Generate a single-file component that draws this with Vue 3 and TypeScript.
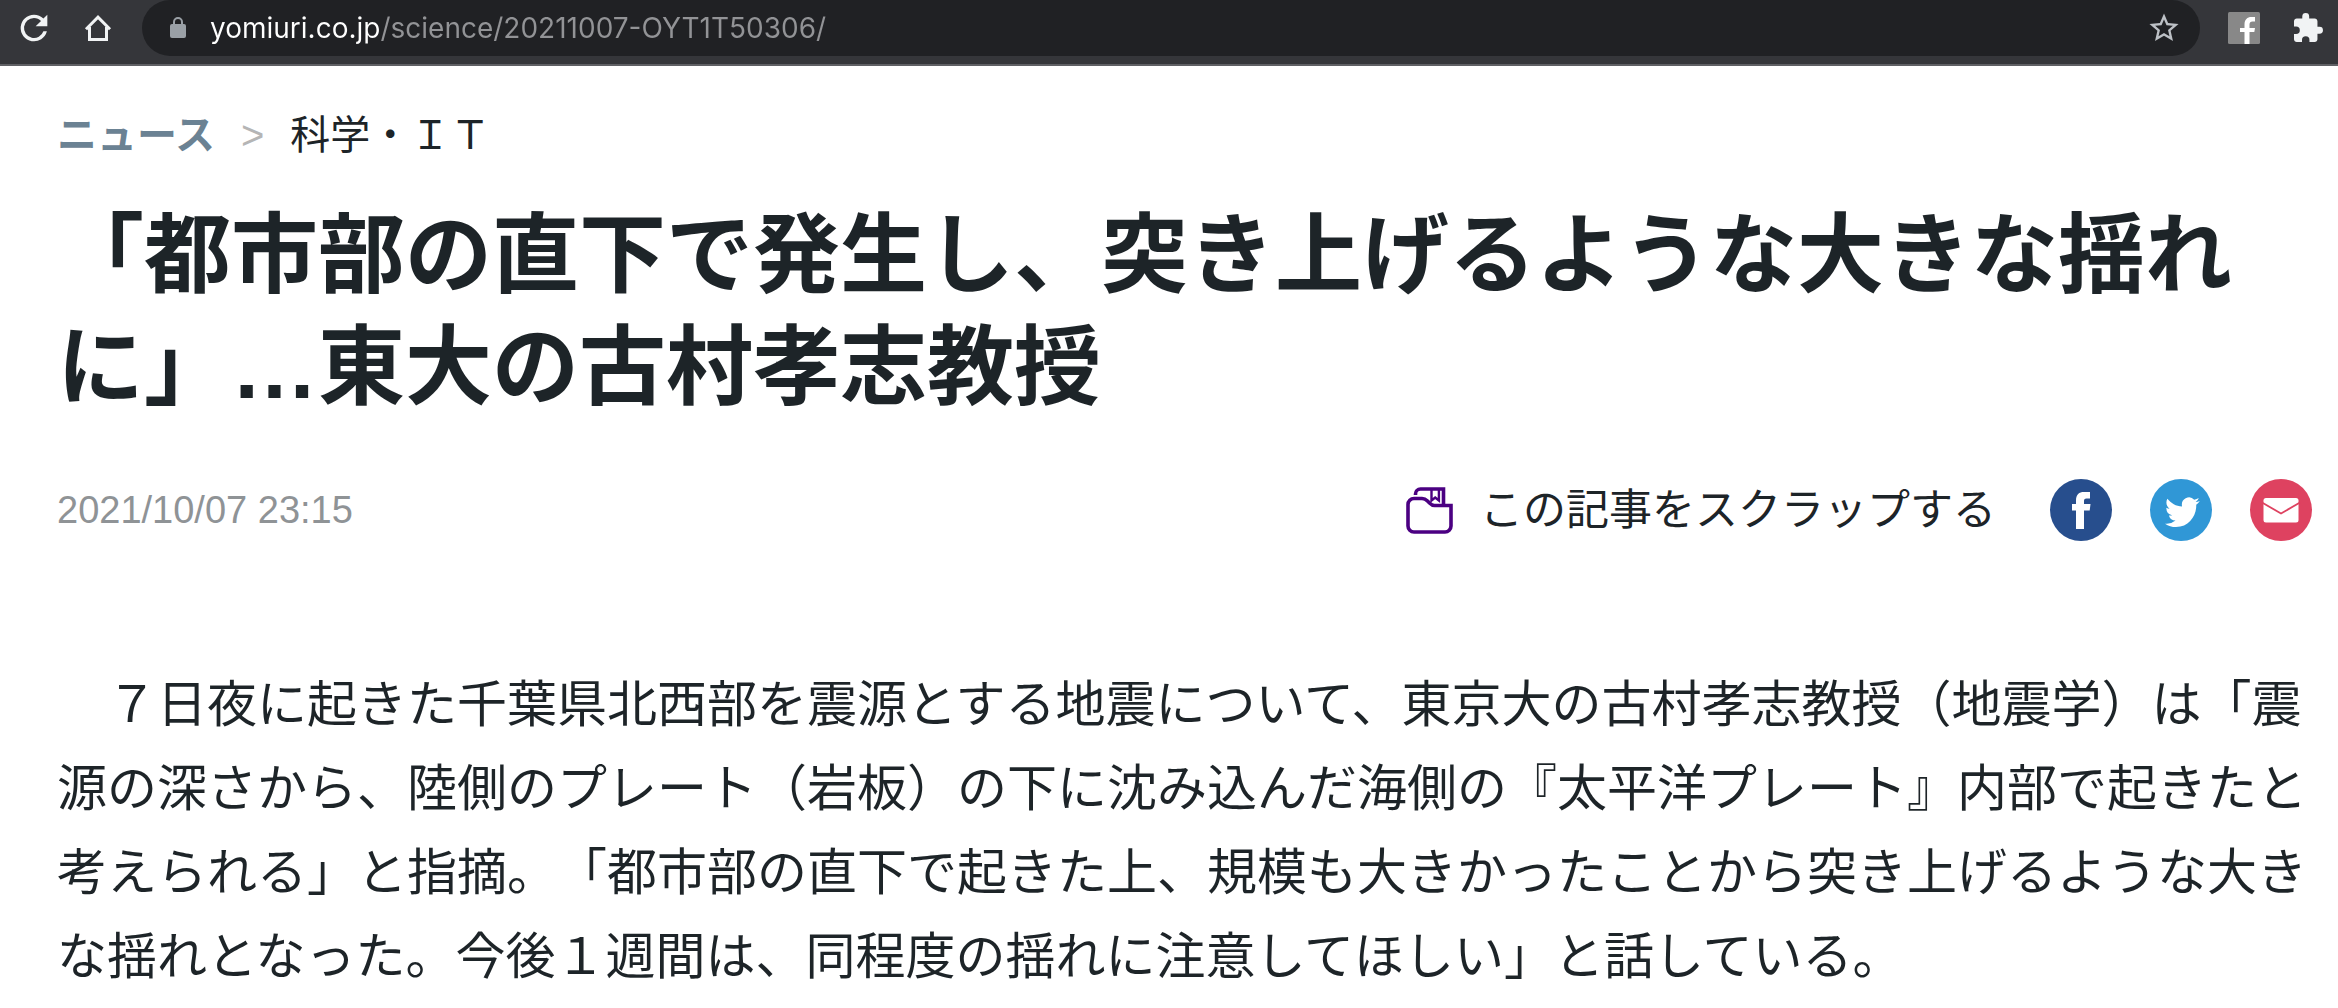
<script setup lang="ts">
import { ref } from 'vue'

const address = ref('yomiuri.co.jp/science/20211007-OYT1T50306/')
</script>

<template>
  <div class="window">
    <header class="toolbar">
      <button class="tool" type="button" aria-label="再読み込み">
        <svg viewBox="2.4 2.4 19.2 19.2">
          <path
            fill="#f1f3f4"
            d="M17.65 6.35A7.96 7.96 0 0 0 12 4a8 8 0 1 0 7.73 10h-2.08A6 6 0 1 1 12 6c1.66 0 3.14.69 4.22 1.78L13 11h7V4z"
          />
        </svg>
      </button>
      <button class="tool" type="button" aria-label="ホーム">
        <svg viewBox="0 0 32 32" fill="none" stroke="#f1f3f4" stroke-width="3">
          <path d="M7.5 15v12.5h17V15" />
          <path d="M4 17.200L16 5.200l12 12" />
        </svg>
      </button>
      <form class="omnibox" @submit.prevent>
        <svg class="lock" viewBox="0 0 16 22">
          <path d="M4 8V5a4 4 0 0 1 8 0v3" fill="none" stroke="#9aa0a6" stroke-width="2" />
          <rect y="7" width="16" height="14" rx="2" fill="#9aa0a6" />
        </svg>
        <input v-model="address" class="url" type="text" aria-label="アドレス" spellcheck="false" />
        <button class="tool" type="button" aria-label="ブックマーク">
          <svg viewBox="1 1 22 22">
            <path
              fill="#bdc1c6"
              d="M22 9.240l-7.190-.620L12 2 9.190 8.630 2 9.240l5.460 4.730L5.820 21 12 17.270 18.180 21l-1.630-7.030zM12 15.400l-3.760 2.270 1-4.280-3.320-2.880 4.380-.380L12 6.100l1.710 4.040 4.380.380-3.320 2.880 1 4.280z"
            />
          </svg>
        </button>
      </form>
      <button class="tool" type="button" aria-label="Facebook 拡張機能">
        <svg viewBox="0 0 32 32">
          <rect width="32" height="32" rx="1.500" fill="#888" />
          <path
            fill="#fff"
            d="M16.500 32V20H12v-4h4.500v-3.500c0-5 2.800-7.500 7-7.500H27v4.500h-2.500c-2 0-3 1-3 3V16H27l-.700 4h-4.800v12z"
          />
        </svg>
      </button>
      <button class="tool" type="button" aria-label="拡張機能">
        <svg viewBox="0.550 0.280 23.200 23.200">
          <path
            fill="#f1f3f4"
            d="M20.500 11H19V7c0-1.100-.9-2-2-2h-4V3.500a2.500 2.500 0 0 0-5 0V5H4c-1.100 0-2 .9-2 2v3.800h1.500a2.700 2.700 0 0 1 0 5.400H2V20c0 1.100.9 2 2 2h3.800v-1.500a2.700 2.700 0 0 1 5.400 0V22H17c1.100 0 2-.9 2-2v-4h1.500a2.500 2.500 0 0 0 0-5z"
          />
        </svg>
      </button>
    </header>

    <main class="article">
      <nav class="crumbs" aria-label="パンくずリスト">
        <a class="crumb-link" href="#news">ニュース</a>
        <span class="crumb-sep">&gt;</span>
        <span>科学・ＩＴ</span>
      </nav>

      <h1 class="title">「都市部の直下で発生し、突き上げるような大きな揺れに」…東大の古村孝志教授</h1>

      <div class="meta">
        <time datetime="2021-10-07T23:15">2021/10/07 23:15</time>
        <button class="scrap" type="button">
          <svg viewBox="0 0 48 48" fill="none" stroke="#4b0082" stroke-width="3.600">
            <path
              d="M2 18.500a6 6 0 0 1 6-6h8c3 0 4 1 5.500 2.500l2 2c1.500 1.500 2.500 2.500 5 2.500H45V40a6 6 0 0 1-6 6H8a6 6 0 0 1-6-6z"
            />
            <path d="M9.500 9V8a5 5 0 0 1 5-5h23v16" />
            <path d="M25.500 3v11.500l3.700-3 3.700 3V3" stroke-width="2.400" />
          </svg>
          この記事をスクラップする
        </button>
        <div class="share">
          <a href="#facebook" aria-label="Facebook">
            <svg viewBox="0 0 62 62">
              <circle cx="31" cy="31" r="31" fill="#274e8d" />
              <path
                fill="#fff"
                d="M26 50V31.500h-4V25h4v-3.500c0-6 3-8.500 8-8.500h6v6.500h-3.500c-2 0-2.500 1-2.500 2.500v3h6.500l-.8 6.500H34V50z"
              />
            </svg>
          </a>
          <a href="#twitter" aria-label="Twitter">
            <svg viewBox="0 0 62 62">
              <circle cx="31" cy="31" r="31" fill="#3097d6" />
              <path
                fill="#fff"
                transform="translate(15 15) scale(1.450 1.520)"
                d="M23.950 4.570a10 10 0 0 1-2.820.770 4.960 4.960 0 0 0 2.160-2.720c-.950.550-2 .950-3.130 1.180a4.920 4.920 0 0 0-8.380 4.480C7.690 8.090 4.070 6.130 1.640 3.160a4.820 4.820 0 0 0-.670 2.470c0 1.710.870 3.210 2.190 4.100a4.900 4.900 0 0 1-2.230-.620v.060a4.920 4.920 0 0 0 3.950 4.830 5 5 0 0 1-2.210.080 4.940 4.940 0 0 0 4.600 3.420A9.870 9.870 0 0 1 0 19.540a13.990 13.990 0 0 0 7.550 2.210c9.050 0 14-7.500 14-13.980 0-.210 0-.420-.020-.630a9.940 9.940 0 0 0 2.460-2.550z"
              />
            </svg>
          </a>
          <a href="#mail" aria-label="メール">
            <svg viewBox="0 0 62 62">
              <circle cx="31" cy="31" r="31" fill="#de4260" />
              <rect x="13.500" y="19" width="35" height="24.500" rx="2.500" fill="#fff" />
              <path d="M12 23.500l19 11 19-11" fill="none" stroke="#de4260" stroke-width="1.800" />
            </svg>
          </a>
        </div>
      </div>

      <p class="body">
        　７日夜に起きた千葉県北西部を震源とする地震について、東京大の古村孝志教授（地震学）は「震源の深さから、陸側のプレート（岩板）の下に沈み込んだ海側の『太平洋プレート』内部で起きたと考えられる」と指摘。「都市部の直下で起きた上、規模も大きかったことから突き上げるような大きな揺れとなった。今後１週間は、同程度の揺れに注意してほしい」と話している。
      </p>
    </main>
  </div>
</template>

<style>
body {
  margin: 0;
  background: #fff;
}
</style>

<style scoped>
.window {
  color: #1d2428;
  font-family: "Liberation Sans", "Noto Sans CJK JP", sans-serif;
  text-spacing-trim: space-all;
}

button {
  padding: 0;
  border: 0;
  background: none;
  color: inherit;
  font: inherit;
  cursor: pointer;
}

svg {
  display: block;
}

.toolbar {
  display: flex;
  align-items: center;
  gap: 32px;
  padding: 0 14px 8px 18px;
  border-bottom: 2px solid #5f6064;
  background: #35363a;
}

.tool,
.tool svg {
  flex: none;
  width: 32px;
  height: 32px;
}

.omnibox {
  display: flex;
  flex: 1;
  align-items: center;
  height: 56px;
  margin: 0 -4px;
  padding: 0 20px 0 28px;
  border-radius: 28px;
  background: #202124;
}

.lock {
  flex: none;
  width: 16px;
  height: 22px;
}

.url {
  flex: 1;
  min-width: 0;
  margin: 0 24px;
  padding: 0;
  border: 0;
  outline: 0;
  /* The host name is white and the path after it is grey. */
  background: linear-gradient(to right, #fff 170px, #929396 170px);
  background-clip: text;
  -webkit-background-clip: text;
  -webkit-text-fill-color: transparent;
  font: 28px/40px Inter, Roboto, sans-serif;
}

.article {
  padding: 41px 26px 10px 57px;
}

.crumbs {
  display: flex;
  align-items: center;
  gap: 26px;
  font-size: 40px;
  line-height: 56px;
}

.crumb-link {
  color: #6b8293;
  font-weight: bold;
  text-decoration: none;
}

.crumb-sep {
  color: #b5b5b5;
}

.title {
  margin: 37px 0 0;
  font-size: 87px;
  font-weight: bold;
  line-height: 112px;
}

.meta {
  display: flex;
  align-items: center;
  margin-top: 55px;
}

.meta time {
  margin-right: auto;
  color: #8f9396;
  font-size: 38px;
}

.scrap {
  display: flex;
  align-items: center;
  gap: 26px;
  font-size: 43px;
  line-height: 60px;
}

.scrap svg {
  width: 48px;
  height: 48px;
}

.share {
  display: flex;
  gap: 38px;
  margin-left: 54px;
}

.share svg {
  width: 62px;
  height: 62px;
}

.body {
  margin: 122px 0 0;
  font-size: 50px;
  line-height: 84px;
}
</style>
